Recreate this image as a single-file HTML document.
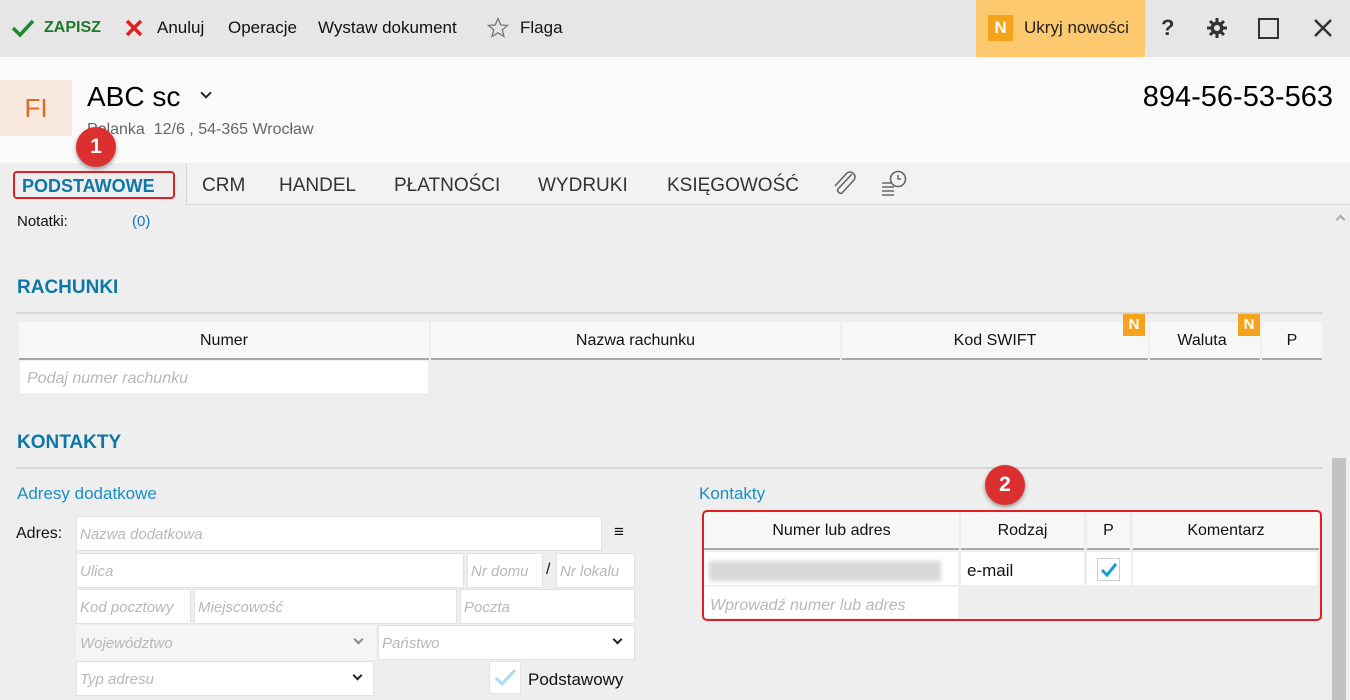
<!DOCTYPE html>
<html><head><meta charset="utf-8"><style>
*{margin:0;padding:0;box-sizing:border-box}
body{width:1350px;height:700px;overflow:hidden;background:#eeeeee;font-family:"Liberation Sans",sans-serif;position:relative;color:#111}
.a{position:absolute;white-space:nowrap}
.tb{font-size:17px;top:18px}
.tab{font-size:19px;top:175px;color:#333}
.in{position:absolute;background:#fff;border:1px solid #e3e3e3;color:#b8b8b8;font-style:italic;font-size:15px;padding:0 3px;line-height:35px;height:35px;overflow:hidden;white-space:nowrap}
.th{position:absolute;background:#f7f7f7;border-bottom:2px solid #a8a8a8;font-size:16px;text-align:center;line-height:38px;height:38px}
.nb{position:absolute;background:#f5a31a;color:#fff;font-weight:bold;font-size:15px;width:22px;height:22px;text-align:center;line-height:22px}
.bl{color:#0d78a8;font-weight:bold;font-size:19px}
.badge{position:absolute;width:40px;height:40px;border-radius:50%;background:#dc3030;color:#fff;font-size:21px;font-weight:bold;text-align:center;line-height:40px;box-shadow:0 2px 4px rgba(0,0,0,.4)}
.chev{position:absolute;width:8px;height:8px;border-right:2px solid #222;border-bottom:2px solid #222;transform:rotate(45deg)}
</style></head><body>
<div class="a" style="left:0;top:0;width:1350px;height:57px;background:#e6e6e6"></div>
<svg class="a" style="left:11px;top:18px" width="24" height="20"><path d="M2 10 L9 17 L22 3" stroke="#1e8a2a" stroke-width="3.5" fill="none"/></svg>
<div class="a tb" style="left:44px;color:#1e7a28;font-weight:bold;font-size:16px;top:19px">ZAPISZ</div>
<svg class="a" style="left:125px;top:19px" width="18" height="18"><path d="M2 2 L16 16 M16 2 L2 16" stroke="#e02020" stroke-width="3.5"/></svg>
<div class="a tb" style="left:157px">Anuluj</div>
<div class="a tb" style="left:228px">Operacje</div>
<div class="a tb" style="left:318px">Wystaw dokument</div>
<svg class="a" style="left:487px;top:17px" width="22" height="21"><path d="M11 1.5 L13.8 8 L20.5 8.4 L15.3 12.8 L17 19.5 L11 15.8 L5 19.5 L6.7 12.8 L1.5 8.4 L8.2 8 Z" fill="none" stroke="#777" stroke-width="1.3"/></svg>
<div class="a tb" style="left:520px">Flaga</div>
<div class="a" style="left:976px;top:0;width:169px;height:57px;background:#fdc96e"></div>
<div class="nb" style="left:988px;top:15px;width:25px;height:26px;line-height:26px;font-size:17px">N</div>
<div class="a tb" style="left:1024px;color:#222">Ukryj nowości</div>
<div class="a" style="left:1161px;top:15px;font-size:22px;color:#333;font-weight:bold">?</div>
<svg class="a" style="left:1206px;top:17px" width="22" height="22" viewBox="0 0 22 22"><g stroke="#333" stroke-width="3"><path d="M11 1v20M1 11h20M4 4l14 14M18 4L4 18"/></g><circle cx="11" cy="11" r="6.5" fill="#333"/><circle cx="11" cy="11" r="3" fill="#e6e6e6"/></svg>
<div class="a" style="left:1258px;top:18px;width:21px;height:21px;border:2.5px solid #333"></div>
<svg class="a" style="left:1313px;top:18px" width="20" height="20"><path d="M2 2L18 18M18 2L2 18" stroke="#333" stroke-width="2.5"/></svg>
<div class="a" style="left:0;top:57px;width:1350px;height:106px;background:#fafafa"></div>
<div class="a" style="left:0;top:80px;width:72px;height:56px;background:#f8e8df;color:#e06a1e;font-size:26px;text-align:center;line-height:56px">FI</div>
<div class="a" style="left:87px;top:81px;font-size:28px;color:#000">ABC sc</div>
<div class="chev" style="left:202px;top:89px"></div>
<div class="a" style="left:87px;top:121px;font-size:16px;color:#666">Polanka&nbsp; 12/6 , 54-365 Wrocław</div>
<div class="a" style="right:17px;top:81px;font-size:29px;color:#000">894-56-53-563</div>
<div class="a" style="left:0;top:163px;width:1350px;height:42px;background:#f2f2f2;border-bottom:1px solid #d6d6d6"></div>
<div class="a" style="left:0;top:163px;width:187px;height:43px;background:#eeeeee;border-right:1px solid #d6d6d6"></div>
<div class="a" style="left:13px;top:171px;width:162px;height:28px;border:2px solid #e02020;border-radius:4px"></div>
<div class="a tab" style="left:22px;color:#0d78a8;font-weight:bold;font-size:18px;top:176px">PODSTAWOWE</div>
<div class="a tab" style="left:202px">CRM</div>
<div class="a tab" style="left:279px">HANDEL</div>
<div class="a tab" style="left:394px">PŁATNOŚCI</div>
<div class="a tab" style="left:538px">WYDRUKI</div>
<div class="a tab" style="left:667px">KSIĘGOWOŚĆ</div>
<svg class="a" style="left:830px;top:170px" width="28" height="26" viewBox="0 0 28 26"><path d="M22 4 L8 19 a3 3 0 0 0 4 4 L24 10 a5 5 0 0 0 -7 -7 L5 16" fill="none" stroke="#666" stroke-width="1.6"/></svg>
<svg class="a" style="left:880px;top:169px" width="30" height="27"><path d="M2 14h12M2 18h12M2 22h12M2 26h12" stroke="#666" stroke-width="1.5"/><circle cx="18" cy="10" r="7.5" fill="#f2f2f2" stroke="#666" stroke-width="1.6"/><path d="M18 6v4h3" stroke="#666" stroke-width="1.5" fill="none"/></svg>
<div class="badge" style="left:76px;top:127px">1</div>
<div class="a" style="left:17px;top:213px;font-size:15px">Notatki:</div>
<div class="a" style="left:132px;top:213px;font-size:15px;color:#1a73c8">(0)</div>
<div class="chev" style="left:1337px;top:216px;transform:rotate(225deg);border-color:#aaa;width:7px;height:7px"></div>
<div class="a bl" style="left:17px;top:277px">RACHUNKI</div>
<div class="a" style="left:16px;top:312px;width:1307px;height:2px;background:#d8d8d8"></div>
<div class="th" style="left:19px;top:322px;width:410px">Numer</div>
<div class="th" style="left:431px;top:322px;width:409px">Nazwa rachunku</div>
<div class="th" style="left:842px;top:322px;width:306px">Kod SWIFT</div>
<div class="th" style="left:1150px;top:322px;width:110px;padding-right:6px">Waluta</div>
<div class="th" style="left:1262px;top:322px;width:60px">P</div>
<div class="nb" style="left:1123px;top:314px">N</div>
<div class="nb" style="left:1238px;top:314px">N</div>
<div class="in" style="left:20px;top:361px;width:408px;height:32px;border:none;line-height:36px;padding-left:7px;font-size:16px">Podaj numer rachunku</div>
<div class="a bl" style="left:17px;top:432px">KONTAKTY</div>
<div class="a" style="left:16px;top:467px;width:1307px;height:2px;background:#d8d8d8"></div>
<div class="a" style="left:17px;top:484px;font-size:17px;color:#1a8fc4">Adresy dodatkowe</div>
<div class="a" style="left:699px;top:484px;font-size:17px;color:#1a8fc4">Kontakty</div>
<div class="a" style="left:16px;top:525px;font-size:16px">Adres:</div>
<div class="in" style="left:76px;top:516px;width:526px">Nazwa dodatkowa</div>
<div class="a" style="left:614px;top:522px;font-size:17px">≡</div>
<div class="in" style="left:76px;top:553px;width:388px">Ulica</div>
<div class="in" style="left:467px;top:553px;width:76px">Nr domu</div>
<div class="a" style="left:546px;top:561px;font-size:16px">/</div>
<div class="in" style="left:556px;top:553px;width:79px">Nr lokalu</div>
<div class="in" style="left:76px;top:589px;width:115px">Kod pocztowy</div>
<div class="in" style="left:194px;top:589px;width:263px">Miejscowość</div>
<div class="in" style="left:460px;top:589px;width:175px">Poczta</div>
<div class="in" style="left:76px;top:625px;width:300px;background:#f5f5f5;border-color:#f5f5f5">Województwo</div>
<div class="chev" style="left:355px;top:636px;border-color:#888;width:7px;height:7px"></div>
<div class="in" style="left:378px;top:625px;width:257px">Państwo</div>
<div class="chev" style="left:614px;top:636px;width:7px;height:7px"></div>
<div class="in" style="left:76px;top:661px;width:298px">Typ adresu</div>
<div class="chev" style="left:354px;top:672px;width:7px;height:7px"></div>
<div class="a" style="left:489px;top:661px;width:32px;height:33px;background:#fff;border:1px solid #e3e3e3"></div>
<svg class="a" style="left:494px;top:667px" width="24" height="20"><path d="M2 11 L8 17 L21 3" stroke="#a8dcf0" stroke-width="3" fill="none"/></svg>
<div class="a" style="left:528px;top:670px;font-size:17px">Podstawowy</div>
<div class="th" style="left:704px;top:512px;width:255px">Numer lub adres</div>
<div class="th" style="left:961px;top:512px;width:123px">Rodzaj</div>
<div class="th" style="left:1087px;top:512px;width:43px">P</div>
<div class="th" style="left:1133px;top:512px;width:186px">Komentarz</div>
<div class="a" style="left:704px;top:552px;width:254px;height:33px;background:#fff"></div>
<div class="a" style="left:709px;top:561px;width:232px;height:20px;background:#d8d8d8;filter:blur(2px)"></div>
<div class="a" style="left:961px;top:552px;width:123px;height:33px;background:#fff;font-size:17px;line-height:38px;padding-left:6px">e-mail</div>
<div class="a" style="left:1087px;top:552px;width:44px;height:33px;background:#fff"></div>
<div class="a" style="left:1097px;top:558px;width:23px;height:23px;border:1px solid #ccc;background:#fff"></div>
<svg class="a" style="left:1100px;top:562px" width="18" height="15"><path d="M2 8 L7 13 L16 2" stroke="#1a9bd8" stroke-width="3" fill="none"/></svg>
<div class="a" style="left:1133px;top:552px;width:184px;height:33px;background:#fff"></div>
<div class="in" style="left:704px;top:587px;width:254px;height:31px;border:none;line-height:37px;padding-left:6px;font-size:16px">Wprowadź numer lub adres</div>
<div class="a" style="left:702px;top:510px;width:620px;height:111px;border:2px solid #e02020;border-radius:5px"></div>
<div class="badge" style="left:985px;top:465px">2</div>
<div class="a" style="left:1332px;top:458px;width:14px;height:242px;background:#c2c2c2"></div>
</body></html>
